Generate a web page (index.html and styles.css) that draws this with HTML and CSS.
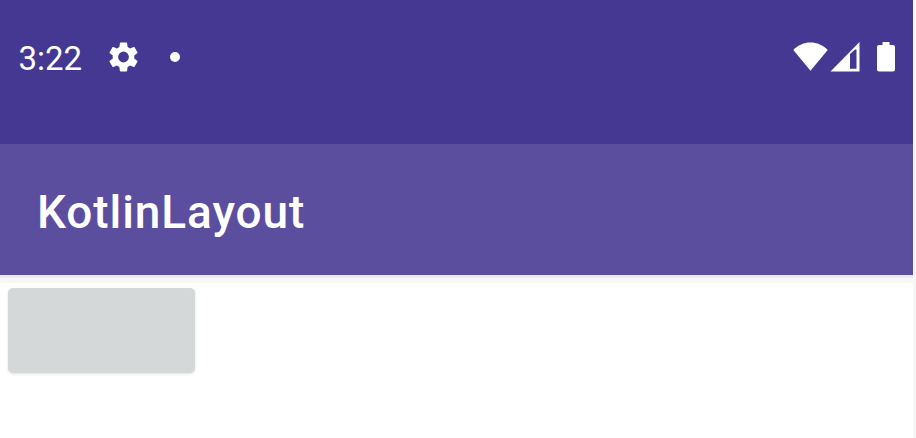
FILE: index.html
```html
<!DOCTYPE html>
<html lang="en">
<head>
<meta charset="utf-8">
<title>KotlinLayout</title>
<link rel="stylesheet" href="styles.css">
</head>
<body>
<div class="screen">
  <header class="status-bar">
    <span class="time">3:22</span>
    <svg class="gear" viewBox="2.4 2 19.2 20"><path d="M19.14 12.94c.04-.3.06-.61.06-.94 0-.32-.02-.64-.07-.94l2.03-1.58c.18-.14.23-.41.12-.61l-1.92-3.32c-.12-.22-.37-.29-.59-.22l-2.39.96c-.5-.38-1.03-.7-1.62-.94L14.4 2.81c-.04-.24-.24-.41-.48-.41h-3.84c-.24 0-.43.17-.47.41l-.36 2.54c-.59.24-1.13.57-1.62.94l-2.39-.96c-.22-.08-.47 0-.59.22L2.74 8.87c-.12.21-.08.47.12.61l2.03 1.58c-.05.3-.09.63-.09.94s.02.64.07.94l-2.03 1.58c-.18.14-.23.41-.12.61l1.92 3.32c.12.22.37.29.59.22l2.39-.96c.5.38 1.03.7 1.62.94l.36 2.54c.05.24.24.41.48.41h3.84c.24 0 .44-.17.47-.41l.36-2.54c.59-.24 1.13-.56 1.62-.94l2.39.96c.22.08.47 0 .59-.22l1.92-3.32c.12-.22.07-.47-.12-.61l-2.01-1.58zM12 15.6A3.6 3.6 0 1 1 12 8.4a3.6 3.6 0 0 1 0 7.2z"/></svg>
    <span class="dot"></span>
    <div class="indicators">
      <svg class="wifi" viewBox="0 0 35 29"><path d="M17.5 28.7 0.3 8C5 3 11 .4 17.5 .4S30 3 34.7 8Z"/></svg>
      <svg class="signal" viewBox="0 0 30 30"><path fill-rule="evenodd" d="M.5 29.500 29.500 0v29.500zM20 12v14.700h6.500V7.500h-1.500z"/></svg>
      <svg class="battery" viewBox="0 0 18 30"><path d="M5.500 0h7v3H16a2 2 0 0 1 2 2v22.500a2 2 0 0 1-2 2H2a2 2 0 0 1-2-2V5a2 2 0 0 1 2-2h3.500z"/></svg>
    </div>
  </header>
  <div class="app-bar"><h1 class="title">KotlinLayout</h1></div>
  <main class="content"><button class="button" type="button" aria-label="Button"></button></main>
</div>
</body>
</html>
```
FILE: styles.css
```css
* { box-sizing: border-box; }
body {
  margin: 0;
  background: #f7f7f7;
  font-family: Roboto, sans-serif;
}
svg { display: block; fill: #fff; flex: none; }
.screen {
  width: 913px;
  height: 438px;
  display: flex;
  flex-direction: column;
  background: #fff;
  overflow: hidden;
}
.status-bar {
  height: 144px;
  flex: none;
  display: flex;
  align-items: flex-start;
  padding: 42px 18px 0 18.5px;
  background: #443893;
}
.time {
  width: 90.5px;
  margin-top: -3px;
  font-size: 33px;
  line-height: 39px;
  color: #fff;
}
.gear { width: 29px; height: 30px; }
.dot {
  width: 10px;
  height: 10px;
  margin: 10px 0 0 32px;
  border-radius: 50%;
  background: #fff;
}
.indicators {
  display: flex;
  margin-left: auto;
}
.wifi { width: 35px; height: 29px; margin-right: 2px; }
.signal { width: 30px; height: 30px; margin-right: 17px; }
.battery { width: 18px; height: 30px; }
.app-bar {
  height: 131px;
  flex: none;
  display: flex;
  align-items: center;
  padding: 4px 37px 0;
  background: #5c4e9f;
}
.title {
  margin: 0;
  font-size: 46px;
  line-height: 54px;
  font-weight: 500;
  letter-spacing: 0.9px;
  color: #fff;
}
.content {
  flex: 1;
  padding: 13px 8px;
  background: linear-gradient(#ece9f3 0 3px, #f7f7f5 3px 8px, #fff 8px);
}
.button {
  display: block;
  width: 187px;
  height: 85px;
  padding: 0;
  border: 0;
  border-radius: 5px;
  background: #d4d8d9;
  box-shadow: 0 1px 3px rgba(0, 0, 0, .12);
}
```
